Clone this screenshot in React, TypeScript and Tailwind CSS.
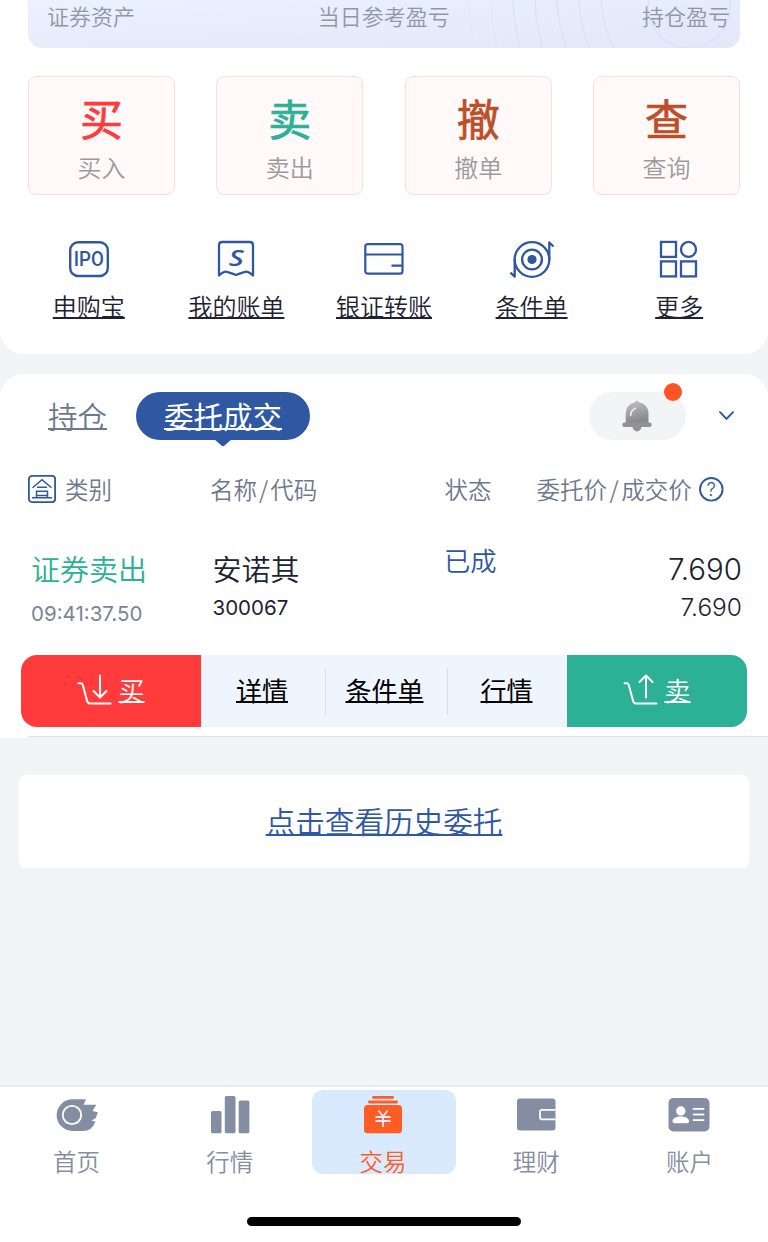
import type { ReactNode } from "react";

const actions = [
  { big: "买", label: "买入", color: "text-[#ff3b3b]" },
  { big: "卖", label: "卖出", color: "text-[#2cb096]" },
  { big: "撤", label: "撤单", color: "text-[#bb4f27]" },
  { big: "查", label: "查询", color: "text-[#bb4f27]" },
];

function IpoIcon() {
  return (
    <svg width="44" height="44" viewBox="0 0 44 44" fill="none" stroke="#2f57a2" strokeWidth="2.4">
      <rect x="3.2" y="5.2" width="37.6" height="33.8" rx="8" />
      <text x="21.8" y="29" textAnchor="middle" fontSize="20" fontFamily="Roboto" fontWeight="500" fill="#2f57a2" stroke="none" textLength="30" lengthAdjust="spacingAndGlyphs">IPO</text>
    </svg>
  );
}

function BillIcon() {
  return (
    <svg width="44" height="44" viewBox="0 0 44 44" fill="none" stroke="#2f57a2" strokeWidth="2.3" strokeLinejoin="round">
      <path d="M5 38.5V8.2Q5 5 8.2 5H35.8Q39 5 39 8.2V38.5Q34 34 31 34.8Q28 35.5 22 38Q16 35.5 13 34.8Q10 34 5 38.5Z" />
      <text x="22.3" y="29" textAnchor="middle" fontSize="22" fontFamily="Open Sans, sans-serif" fontStyle="italic" fontWeight="600" fill="#2f57a2" stroke="none" textLength="15" lengthAdjust="spacingAndGlyphs">S</text>
    </svg>
  );
}

function CardIcon() {
  return (
    <svg width="44" height="44" viewBox="0 0 44 44" fill="none" stroke="#2f57a2" strokeWidth="2.2" strokeLinejoin="round">
      <rect x="3.3" y="7.1" width="37.2" height="29.6" rx="2.5" />
      <path d="M3.3 17.5H40.5M29.5 28.6H40.5" />
    </svg>
  );
}

function TargetIcon() {
  return (
    <svg width="46" height="44" viewBox="0 0 46 44" fill="none" stroke="#2f57a2" strokeWidth="2.3" strokeLinejoin="round">
      <circle cx="23" cy="22.5" r="17.3" />
      <circle cx="23" cy="22.5" r="9.9" />
      <circle cx="23" cy="22.5" r="4.6" fill="#2f57a2" stroke="none" />
      <path d="M40.3 23V5.5L44.5 9.5M5.7 22V39.7L1.5 35.7" />
    </svg>
  );
}

function MoreIcon() {
  return (
    <svg width="44" height="44" viewBox="0 0 44 44" fill="none" stroke="#2f57a2" strokeWidth="2.3">
      <rect x="4" y="4.9" width="15" height="15" />
      <circle cx="31.5" cy="12.4" r="7.5" />
      <rect x="4" y="24.4" width="15" height="15" />
      <rect x="24" y="24.4" width="15" height="15" />
    </svg>
  );
}

const tools: { label: string; icon: ReactNode }[] = [
  { label: "申购宝", icon: <IpoIcon /> },
  { label: "我的账单", icon: <BillIcon /> },
  { label: "银证转账", icon: <CardIcon /> },
  { label: "条件单", icon: <TargetIcon /> },
  { label: "更多", icon: <MoreIcon /> },
];

function Bell() {
  return (
    <svg width="30" height="32" viewBox="0 0 30 32">
      <defs>
        <linearGradient id="bell" x1="0" y1="0" x2="0.3" y2="1">
          <stop offset="0" stopColor="#c0c0c2" />
          <stop offset="1" stopColor="#89898c" />
        </linearGradient>
      </defs>
      <circle cx="15" cy="27" r="4.4" fill="#929295" />
      <circle cx="15" cy="3" r="2.3" fill="#c0c0c2" />
      <path d="M15 2.2C21.5 2.2 26.5 7 26.5 13.5V23H3.7V13.5C3.7 7 8.5 2.2 15 2.2Z" fill="url(#bell)" />
      <rect x="0.3" y="22.5" width="29.4" height="4.6" rx="2.3" fill="#929295" />
      <path d="M8.7 15Q9 10.5 13.3 8.3" fill="none" stroke="#eeeae2" strokeWidth="1.8" strokeLinecap="round" />
    </svg>
  );
}

function Cart({ up }: { up?: boolean }) {
  return (
    <svg width="36" height="34" viewBox="0 0 36 34" fill="none" stroke="#fff" strokeWidth="2" strokeLinecap="round" strokeLinejoin="round">
      <path d="M1.5 9.2H3.5Q5.2 9.2 5.8 11L10 26.5Q10.8 29.5 13 29.5H33.5" />
      <path d={up ? "M23 23.5V1.8M16.5 8L23 1.5L29.5 8" : "M23 1.5V23M16.5 17L23 23.5L29.5 17"} />
    </svg>
  );
}

const tabs: { label: string; icon: ReactNode; active?: boolean }[] = [
  {
    label: "首页",
    icon: (
      <svg className="shrink-0" width="42" height="40" viewBox="0 0 42 40">
        <path d="M16.5 4.3H30L27.5 9.8H40.3L36.5 16L41.8 17.2L39.8 23L35.5 25.8L39.5 26.5Q36 36 27 36H16.5A15.8 15.8 0 0 1 16.5 4.3Z" fill="#848da1" />
        <circle cx="16" cy="20" r="9.2" fill="none" stroke="#fff" strokeWidth="1.8" />
      </svg>
    ),
  },
  {
    label: "行情",
    icon: (
      <svg className="shrink-0" width="40" height="40" viewBox="0 0 40 40" fill="#848da1">
        <rect x="1" y="16" width="10.5" height="22.3" rx="1.5" />
        <rect x="14.8" y="1" width="10.7" height="37.3" rx="1.5" />
        <rect x="28.7" y="5.5" width="10.7" height="32.8" rx="1.5" />
      </svg>
    ),
  },
  {
    label: "交易",
    active: true,
    icon: (
      <svg className="shrink-0" width="40" height="40" viewBox="0 0 40 40" fill="#ff5c26">
        <rect x="9" y="1" width="22" height="2.8" rx="1.4" />
        <rect x="5" y="5.6" width="30" height="2.8" rx="1.4" />
        <rect x="1" y="10" width="38" height="28.3" rx="3.5" />
        <path d="M15.5 15.5L20 21.5L24.5 15.5M12.5 22H27.5M12.5 26H27.5M20 21.5V32" fill="none" stroke="#dcebfc" strokeWidth="1.8" />
      </svg>
    ),
  },
  {
    label: "理财",
    icon: (
      <svg className="shrink-0" width="40" height="40" viewBox="0 0 40 40">
        <rect x="1" y="3.5" width="38.5" height="32" rx="3" fill="#848da1" />
        <path d="M39.5 14.8H26Q24 14.8 24 16.8V22.3Q24 24.3 26 24.3H39.5" fill="none" stroke="#fff" strokeWidth="1.8" />
      </svg>
    ),
  },
  {
    label: "账户",
    icon: (
      <svg className="shrink-0" width="42" height="40" viewBox="0 0 42 40">
        <rect x="0.5" y="3" width="41" height="33.5" rx="5" fill="#848da1" />
        <g fill="#fff">
          <circle cx="12.8" cy="16" r="4.7" />
          <path d="M4.5 26.5C4.5 23 8 21.5 12.8 21.5S21 23 21 26.5Q21 28.3 19 28.3H6.500Q4.500 28.300 4.500 26.500Z" />
          <rect x="24.8" y="13" width="11.500" height="1.800" />
          <rect x="24.8" y="18.6" width="11.500" height="1.800" />
          <rect x="24.8" y="24.2" width="11.500" height="1.800" />
        </g>
      </svg>
    ),
  },
];

export default function App() {
  return (
    <div className="flex h-[1242px] w-[768px] flex-col overflow-hidden bg-[#f3f4f6] font-['Noto_Sans_CJK_SC',sans-serif] font-[350] [text-decoration-skip-ink:none]">
      <section className="h-[354px] shrink-0 rounded-b-[24px] bg-white">
        <div className="relative mx-7 h-12 overflow-hidden rounded-b-[14px] bg-gradient-to-br from-[#ecf1ff] to-[#e3e8f9]">
          <svg className="absolute right-0 top-0" width="300" height="48" viewBox="0 0 300 48" fill="none" stroke="#d8e3f8" strokeWidth="1.5">
            <circle cx="249" cy="7" r="41" />
            <circle cx="249" cy="-4" r="108" transform="translate(20 0)" />
            <circle cx="249" cy="-4" r="130" transform="translate(20 0)" />
            <circle cx="249" cy="-4" r="152" transform="translate(20 0)" />
            <circle cx="249" cy="-4" r="174" transform="translate(20 0)" />
            <circle cx="249" cy="-4" r="196" transform="translate(20 0)" />
            <circle cx="249" cy="-4" r="218" transform="translate(20 0)" opacity="0.4" />
            <circle cx="249" cy="-4" r="240" transform="translate(20 0)" opacity="0.3" />
          </svg>
          <div className="relative grid grid-cols-3 pl-[19px] pr-[10px] text-[22px] leading-[30px] text-[#9097a8]">
            <span>证券资产</span>
            <span className="pl-[43px]">当日参考盈亏</span>
            <span className="text-right">持仓盈亏</span>
          </div>
        </div>
        <div className="mx-7 mt-7 flex justify-between">
          {actions.map((a) => (
            <button key={a.label} className="flex h-[119px] w-[147px] flex-col items-center rounded-[8px] border-[1.5px] border-[#fddcde] bg-[#fff9f9]">
              <span className={`mt-[15px] text-[43px] leading-[50px] font-normal [-webkit-text-stroke:0.7px_currentColor] [stroke-linejoin:round] ${a.color}`}>{a.big}</span>
              <span className="mt-[9px] text-[24px] leading-[32px] text-[#9b9b9b]">{a.label}</span>
            </button>
          ))}
        </div>
        <nav className="mx-[15px] mt-[42px] grid grid-cols-5">
          {tools.map((t) => (
            <a key={t.label} className="flex flex-col items-center">
              {t.icon}
              <span className="mt-[8px] text-[24px] leading-[34px] text-[#1d2232] underline decoration-[1.5px] underline-offset-[1px]">{t.label}</span>
            </a>
          ))}
        </nav>
      </section>

      <section className="mt-5 h-[364px] shrink-0 rounded-t-[24px] bg-white">
        <div className="flex h-[66px] items-start pl-12 pr-[34px] pt-[18px]">
          <a className="w-[88px] text-[29.5px] leading-[46px] text-[#6e788d] underline decoration-2 underline-offset-[0px]">持仓</a>
          <a className="relative flex h-12 w-[174px] justify-center rounded-full bg-[#2f57a2] text-[29.5px] leading-[46px] text-white">
            <span className="font-normal underline decoration-2 underline-offset-[0px]">委托成交</span>
            <svg className="absolute left-[78px] top-[47px]" width="18" height="8" viewBox="0 0 18 8" fill="#2f57a2">
              <path d="M0 0H18L10.5 6.5Q9 8 7.5 6.5Z" />
            </svg>
          </a>
          <div className="relative ml-auto flex h-12 w-[97px] items-center justify-center rounded-full bg-[#f3f4f6] pr-[1px]">
            <Bell />
            <i className="absolute right-[4px] top-[-9px] size-[18px] rounded-full bg-[#ff5326]" />
          </div>
          <svg className="ml-[33px] mt-[19px]" width="15" height="10" viewBox="0 0 15 10" fill="none" stroke="#2f57a2" strokeWidth="1.9" strokeLinecap="round">
            <path d="M1 1.2L7.5 8L14 1.2" />
          </svg>
        </div>
        <div className="mt-[31px] flex h-9 items-center pl-7 text-[23.5px] leading-[36px] text-[#6e788d]">
          <div className="flex w-[182px] items-center">
            <svg width="28" height="28" viewBox="0 0 28 28" fill="none" stroke="#2f57a2" strokeWidth="1.5">
              <rect x="0.9" y="0.9" width="26.2" height="26.2" rx="3" strokeWidth="1.8" />
              <path d="M4.5 12.8L14 4.8L23.5 12.8M9 12.2H19M8.5 22.5V16.2H19.5V22.5M8.5 20.5H19.5M4 22.8H24" />
            </svg>
            <span className="ml-[9px]">类别</span>
          </div>
          <span className="w-[234.5px]">名称<span className="px-[2px]">/</span>代码</span>
          <span className="w-[92px]">状态</span>
          <span>委托价<span className="px-[2.5px]">/</span>成交价</span>
          <svg className="ml-[6px]" width="26" height="26" viewBox="0 0 26 26" fill="none" stroke="#2f57a2" strokeWidth="1.9">
            <circle cx="13.3" cy="13.3" r="11.3" />
            <text x="13.3" y="20.2" textAnchor="middle" fontSize="19" fontFamily="Inter" fontWeight="300" fill="#2f57a2" stroke="none">?</text>
          </svg>
        </div>
        <div className="mt-[38px] flex h-[110px] pl-[31px] pr-[26px]">
          <div className="flex w-[181.5px] flex-col pt-px">
            <span className="text-[29px] leading-[44px] text-[#2cb096]">证券卖出</span>
            <span className="mt-[9px] font-[Inter] text-[20.5px] leading-[30px] font-normal text-[#7b8497]">09:41:37.50</span>
          </div>
          <div className="flex w-[231.5px] flex-col pt-px">
            <span className="text-[29px] leading-[44px] text-[#1d2232]">安诺其</span>
            <span className="mt-[2px] font-[Inter] text-[20.5px] leading-[32px] font-normal text-[#1d2232]">300067</span>
          </div>
          <span className="-mt-[7px] text-[26.3px] leading-[44px] text-[#2f57a2]">已成</span>
          <div className="ml-auto flex flex-col pt-[2px] text-right font-[Inter] text-[#1d2232]">
            <span className="text-[29.5px] leading-[44px]">7.690</span>
            <span className="text-[24.5px] leading-[32px]">7.690</span>
          </div>
        </div>
        <div className="mx-[21px] flex h-[72px] items-stretch overflow-hidden rounded-[16px] bg-[#eef5ff] text-[26px] leading-[70px] text-black">
          <button className="flex w-[180px] items-center justify-center bg-[#ff3b3b] text-white">
            <Cart />
            <span className="ml-[5px] pb-[2px] underline decoration-[1.5px] underline-offset-[0px]">买</span>
          </button>
          <div className="flex flex-1 items-center font-normal">
            <a className="w-[124px] pb-[2px] pr-[2px] text-center underline decoration-[1.5px] underline-offset-[0px]">详情</a>
            <i className="h-[47px] w-px bg-[#d8dde8]" />
            <a className="w-[121px] pb-[2px] pr-[4px] text-center underline decoration-[1.5px] underline-offset-[0px]">条件单</a>
            <i className="h-[47px] w-px bg-[#d8dde8]" />
            <a className="flex-1 pb-[2px] pr-[2px] text-center underline decoration-[1.5px] underline-offset-[0px]">行情</a>
          </div>
          <button className="flex w-[180px] items-center justify-center bg-[#2cb096] text-white">
            <Cart up />
            <span className="ml-[5px] pb-[2px] underline decoration-[1.5px] underline-offset-[0px]">卖</span>
          </button>
        </div>
        <div className="ml-7 mt-[9px] h-[2px] border-t border-[#dfe1e6] bg-[#f3f4f6]" />
      </section>

      <a className="mx-[19px] mt-[37px] h-[93px] shrink-0 rounded-[7px] bg-white text-center text-[29.6px] leading-[91px] text-[#2f57a2] underline decoration-2 underline-offset-[1px]">
        点击查看历史委托
      </a>

      <footer className="mt-auto h-[157px] shrink-0 border-t-2 border-[#e9eaed] bg-white pt-[3px]">
        <div className="grid w-[766px] grid-cols-5">
          {tabs.map((t) => (
            <a key={t.label} className={`flex h-[84px] flex-col items-center rounded-[11px] pt-[5px] ${t.active ? "ml-[5.6px] w-[144px] bg-[#d9eafe] pr-[2px] text-[#ff5c26]" : "text-[#848da1]"}`}>
              {t.icon}
              <span className="mt-[9px] text-[23.5px] leading-[34px]">{t.label}</span>
            </a>
          ))}
        </div>
        <div className="mx-auto mt-[43px] h-[9px] w-[274px] rounded-full bg-black" />
      </footer>
    </div>
  );
}
